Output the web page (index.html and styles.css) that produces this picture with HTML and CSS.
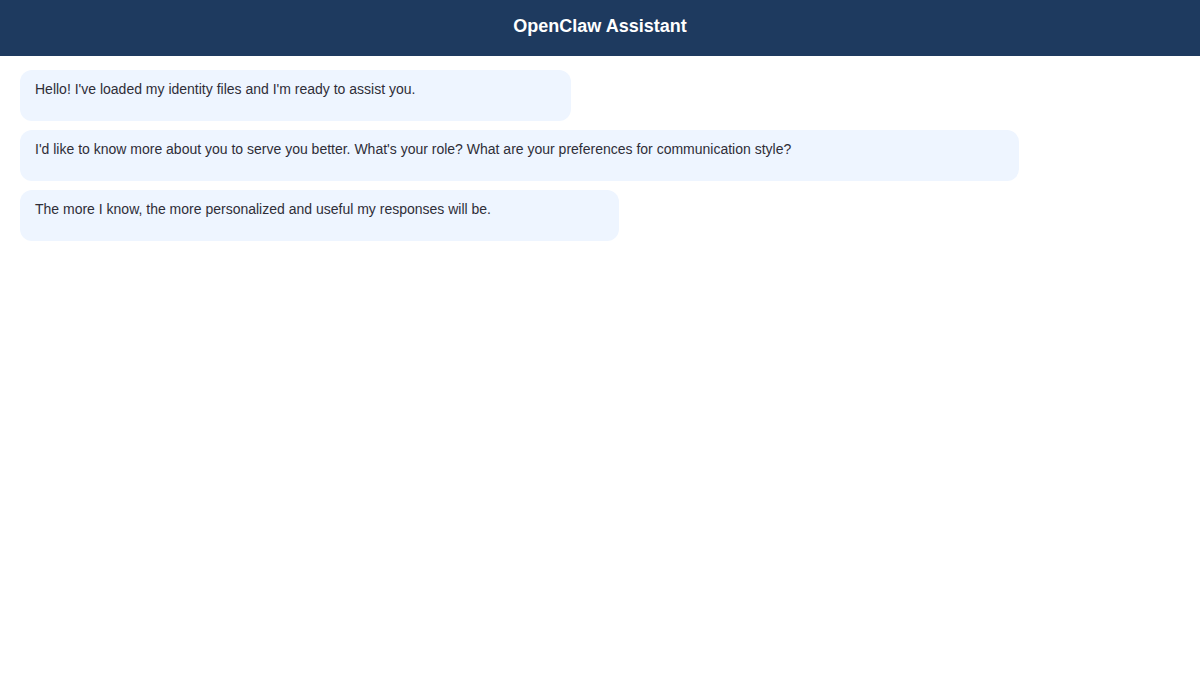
FILE: index.html
```html
<!DOCTYPE html>
<html lang="en">
<head>
<meta charset="utf-8">
<title>OpenClaw Assistant</title>
<link rel="stylesheet" href="styles.css">
</head>
<body>
<header class="topbar">
  <h1 class="title">OpenClaw Assistant</h1>
</header>
<main class="chat">
  <div class="bubble b1">Hello! I've loaded my identity files and I'm ready to assist you.</div>
  <div class="bubble b2">I'd like to know more about you to serve you better. What's your role? What are your preferences for communication style?</div>
  <div class="bubble b3">The more I know, the more personalized and useful my responses will be.</div>
</main>
</body>
</html>
```
FILE: styles.css
```css
html, body {
  margin: 0;
  padding: 0;
  background: #ffffff;
  font-family: "Liberation Sans", Arial, sans-serif;
}
.topbar {
  box-sizing: border-box;
  height: 56px;
  padding-bottom: 4px;
  background: #1e3a5f;
  display: flex;
  align-items: center;
  justify-content: center;
}
.title {
  margin: 0;
  color: #ffffff;
  font-size: 18px;
  font-weight: bold;
}
.chat {
  padding: 14px 20px;
  display: flex;
  flex-direction: column;
  align-items: flex-start;
  gap: 9px;
}
.bubble {
  box-sizing: border-box;
  background: #eef5ff;
  color: #2e2e38;
  font-size: 14px;
  line-height: 21px;
  padding: 9px 15px 21px;
  border-radius: 12px;
}
.b1 { width: 551px; }
.b2 { width: 999px; }
.b3 { width: 599px; }
```
